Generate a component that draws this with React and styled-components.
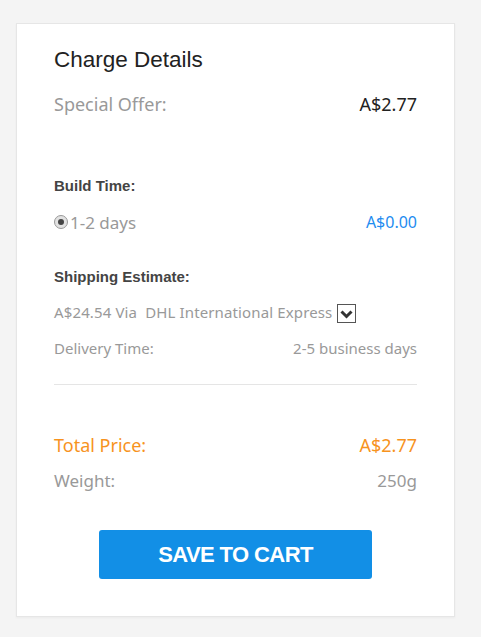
import React from 'react'
import styled, { createGlobalStyle } from 'styled-components'

const GlobalStyle = createGlobalStyle`
  html, body {
    margin: 0;
    padding: 0;
    background: #f4f4f4;
  }
`

const Page = styled.div`
  padding: 23px 26px 19px 16px;
`

const Card = styled.div`
  background: #fff;
  border: 1px solid #e6e6e6;
  box-shadow: 0 1px 2px rgba(0, 0, 0, 0.04);
  padding: 21px 37px 37px 37px;
  font-family: 'Noto Sans', 'Open Sans', sans-serif;
  color: #999;
`

const Title = styled.h2`
  margin: 0;
  font-family: 'Liberation Sans', Arial, sans-serif;
  font-weight: normal;
  font-size: 22.5px;
  line-height: 30px;
  color: #222;
`

const Row = styled.div`
  display: flex;
  justify-content: space-between;
  align-items: center;
  height: 30px;
  margin-top: ${p => p.mt || 0}px;
  font-size: ${p => p.size || 15}px;
  color: ${p => p.color || '#999'};
`

const Value = styled.span`
  color: ${p => p.color || 'inherit'};
  font-size: ${p => (p.size ? `${p.size}px` : 'inherit')};
`

const Heading = styled.div`
  margin-top: ${p => p.mt || 0}px;
  height: 24px;
  line-height: 24px;
  font-family: 'Liberation Sans', Arial, sans-serif;
  font-weight: bold;
  font-size: 15px;
  color: #444;
`

const RadioLabel = styled.label`
  display: flex;
  align-items: center;
`

const Radio = styled.span`
  width: 12px;
  height: 12px;
  border-radius: 50%;
  border: 1px solid #999;
  background: #e2e2e2;
  display: inline-flex;
  align-items: center;
  justify-content: center;
  margin-right: 2px;

  &::after {
    content: '';
    width: 6px;
    height: 6px;
    border-radius: 50%;
    background: #444;
  }
`

const Via = styled.div`
  display: flex;
  align-items: center;
  letter-spacing: 0.13px;
`

const SelectBox = styled.span`
  width: 17px;
  height: 17px;
  border: 1px solid #555;
  margin-left: 5px;
  margin-top: 3px;
  display: inline-flex;
  align-items: center;
  justify-content: center;
  background: #fff;
`

const Divider = styled.hr`
  border: 0;
  border-top: 1px solid #e5e5e5;
  margin: 21px 0 0;
`

const ButtonWrap = styled.div`
  display: flex;
  justify-content: center;
  margin-top: 35px;
`

const Button = styled.button`
  width: 273px;
  height: 49px;
  border: 0;
  border-radius: 3px;
  background: #128fe6;
  color: #fff;
  font-family: 'Liberation Sans', Arial, sans-serif;
  font-weight: bold;
  font-size: 22px;
  letter-spacing: -0.6px;
  cursor: pointer;
`

const Chevron = () => (
  <svg width='13' height='10' viewBox='0 0 13 10'>
    <path d='M1.5 2.5 L6.5 7.5 L11.5 2.5' fill='none' stroke='#333' strokeWidth='3' />
  </svg>
)

const App = () => (
  <>
    <GlobalStyle />
    <Page>
      <Card>
        <Title>Charge Details</Title>
        <Row mt={14} size={18}>
          <span>Special Offer:</span>
          <Value color='#222'>A$2.77</Value>
        </Row>

        <Heading mt={55}>Build Time:</Heading>
        <Row mt={9} size={17}>
          <RadioLabel>
            <Radio />
            1-2 days
          </RadioLabel>
          <Value color='#1e8cf0' size={16}>A$0.00</Value>
        </Row>

        <Heading mt={28}>Shipping Estimate:</Heading>
        <Row mt={8}>
          <Via>
            A$24.54 Via&nbsp;&nbsp;DHL International Express
            <SelectBox><Chevron /></SelectBox>
          </Via>
        </Row>
        <Row mt={6}>
          <span>Delivery Time:</span>
          <span>2-5 business days</span>
        </Row>

        <Divider />

        <Row mt={45} size={18} color='#f7931e'>
          <span>Total Price:</span>
          <span>A$2.77</span>
        </Row>
        <Row mt={5} size={17}>
          <span>Weight:</span>
          <span>250g</span>
        </Row>

        <ButtonWrap>
          <Button>SAVE TO CART</Button>
        </ButtonWrap>
      </Card>
    </Page>
  </>
)

export default App
